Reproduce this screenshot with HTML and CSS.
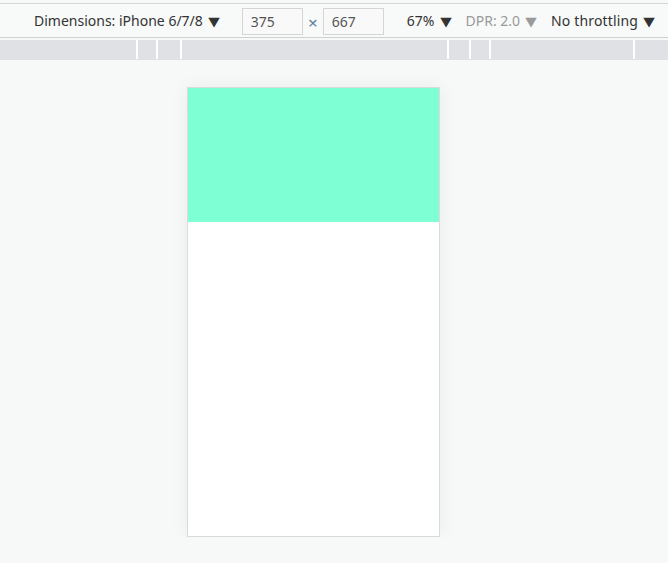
FILE: index.html
```
<!DOCTYPE html>
<html>
<head>
<meta charset="utf-8">
<link rel="stylesheet" href="styles.css">
</head>
<body>
<div class="toolbar">
  <span class="item dims">Dimensions: iPhone 6/7/8<span class="caret">▼</span></span>
  <span class="input">375</span>
  <span class="times">×</span>
  <span class="input">667</span>
  <span class="item zoom">67%<span class="caret">▼</span></span>
  <span class="item dpr">DPR: 2.0<span class="caret">▼</span></span>
  <span class="item throttle">No throttling<span class="caret">▼</span></span>
</div>
<div class="ruler">
  <div class="sp" style="width:136px"></div><div class="mark"></div>
  <div class="sp" style="width:18px"></div><div class="mark"></div>
  <div class="sp" style="width:22px"></div><div class="mark"></div>
  <div class="sp" style="width:265px"></div><div class="mark"></div>
  <div class="sp" style="width:20px"></div><div class="mark"></div>
  <div class="sp" style="width:18px"></div><div class="mark"></div>
  <div class="sp" style="width:142px"></div><div class="mark"></div>
</div>
<div class="stage">
  <div class="device">
    <div class="hero"></div>
    <div class="content"></div>
  </div>
</div>
</body>
</html>
```
FILE: styles.css
```
html, body {
  margin: 0;
  padding: 0;
  background: #f7f8f8;
  font-family: "Noto Sans", "Open Sans", sans-serif;
  font-size: 14px;
  color: #333;
  overflow: hidden;
}
body {
  padding-top: 3px;
}
.toolbar {
  height: 33px;
  border-top: 1px solid #d6d6d6;
  border-bottom: 1px solid #d0d0d0;
  background: #f8f9f9;
  display: flex;
  align-items: center;
  padding-left: 34px;
  box-sizing: content-box;
  white-space: nowrap;
}
.caret {
  display: inline-block;
  font-family: "DejaVu Sans", sans-serif;
  font-size: 13px;
  transform: scaleX(1.15);
  margin-left: 6px;
}
.dims {
  margin-right: 23px;
}
.input {
  box-sizing: border-box;
  width: 61px;
  height: 27px;
  border: 1px solid #d5d5d5;
  background: #f9f9f9;
  color: #555;
  padding-left: 8px;
  line-height: 25px;
  margin-top: 1px;
}
.times {
  width: 20px;
  text-align: center;
  color: #5d7d9c;
  font-size: 17px;
  margin-top: 4px;
}
.zoom {
  margin-left: 23px;
  margin-right: 15px;
}
.dpr {
  color: #9a9a9a;
  margin-right: 15px;
}
.dpr .caret {
  color: #9a9a9a;
}
.throttle {
  letter-spacing: 0.15px;
}
.ruler {
  margin-top: 2px;
  height: 20px;
  background: #dfe1e5;
  display: flex;
}
.sp {
  flex: none;
}
.mark {
  flex: none;
  width: 2px;
  height: 19px;
  background: #ffffff;
}
.stage {
  padding-top: 27px;
  padding-left: 187px;
}
.device {
  width: 251px;
  border: 1px solid #dadada;
  background: #fff;
  box-shadow: 0 0 18px rgba(0, 0, 0, 0.06);
}
.hero {
  height: 134px;
  background: #7fffd4;
}
.content {
  height: 314px;
  background: #fff;
}
```
